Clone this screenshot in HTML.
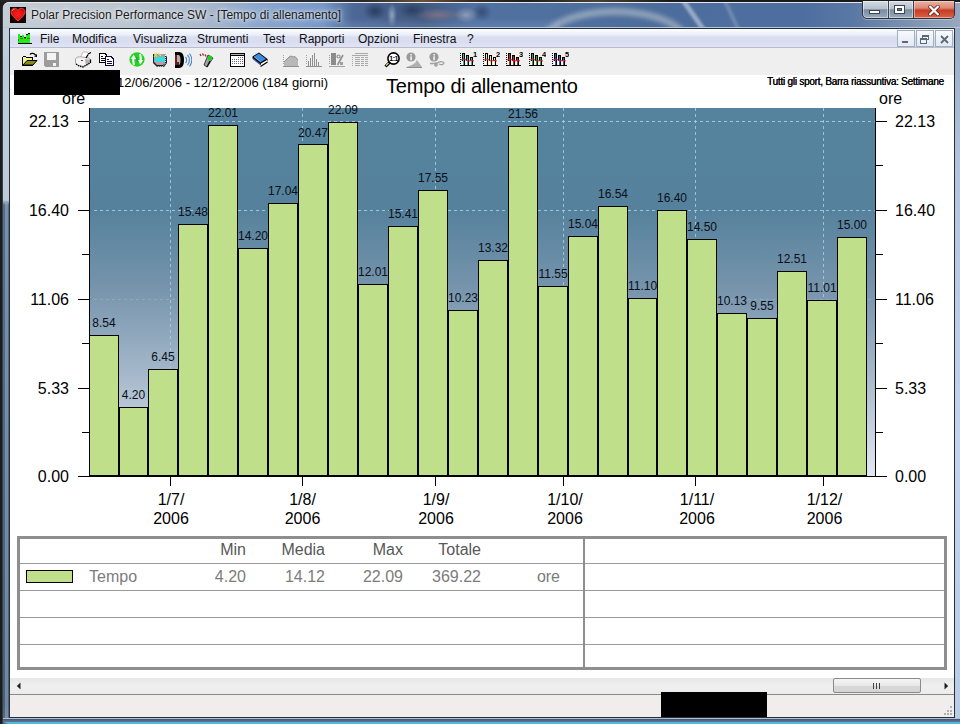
<!DOCTYPE html><html><head><meta charset="utf-8"><style>
*{margin:0;padding:0;box-sizing:border-box}
html,body{width:960px;height:724px;overflow:hidden;background:#1c1c1c;font-family:"Liberation Sans",sans-serif;}
.a{position:absolute}
.t{position:absolute;white-space:nowrap;line-height:1}
</style></head><body><div class="a" style="left:0;top:0;width:960px;height:2px;background:linear-gradient(90deg,#242424 0%,#2a2a2a 38%,#6a5238 44%,#3a2c22 49%,#1e1e1e 55%,#4a4030 62%,#1a1a1a 70%,#1a1a1a 100%)"></div>
<div class="a" style="left:2px;top:2px;width:958px;height:722px;border-radius:7px 0 0 0;background:linear-gradient(180deg,#b8c4d2 0px,#c4ced8 28px,#bccad8 60px,#bfcad8 198px,#566e88 203px,#4e6680 500px,#4a6078 700px,#5a7088 724px);border-left:1px solid #34404e"></div>
<div class="a" style="left:3px;top:2px;width:957px;height:26px;border-radius:6px 0 0 0;border-top:1px solid #e4eaf0;border-bottom:1px solid #b8c6d8;background:linear-gradient(90deg,#c3cbd3 0px,#bcc6d0 120px,#aab8cc 200px,#8aa6cc 260px,#7898c8 320px,#4d6896 350px,#40587e 420px,#5070a0 470px,#5070a0 540px,#4e6e9e 590px,#4c6c9c 650px,#4e6ea0 745px,#4e6ea0 800px,#5a78a4 850px,#7890b0 900px,#9aa8c0 960px)"></div>
<div class="a" style="left:3px;top:3px;width:957px;height:24px;overflow:hidden"><div class="a" style="left:337px;top:0;width:220px;height:24px;background:radial-gradient(ellipse 12px 9px at 35px 8px,rgba(30,45,80,.7),transparent),radial-gradient(ellipse 5px 12px at 52px 12px,rgba(175,190,210,.7),transparent),radial-gradient(ellipse 14px 8px at 72px 7px,rgba(30,45,80,.6),transparent),radial-gradient(ellipse 24px 7px at 98px 12px,rgba(160,125,135,.6),transparent),radial-gradient(ellipse 12px 8px at 126px 12px,rgba(185,185,195,.6),transparent),radial-gradient(ellipse 10px 9px at 142px 9px,rgba(35,50,85,.55),transparent),linear-gradient(180deg,transparent 15px,rgba(120,150,200,.3) 22px)"></div><div class="a" style="left:537px;top:5px;width:150px;height:70px;border-radius:50%;border:7px solid rgba(215,222,215,.5);filter:blur(2.5px)"></div><div class="a" style="left:688px;top:-2px;width:6px;height:30px;background:rgba(200,212,225,.6);transform:skewX(35deg);filter:blur(1.5px)"></div><div class="a" style="left:727px;top:-2px;width:4px;height:30px;background:rgba(180,195,215,.35);transform:skewX(25deg);filter:blur(1.5px)"></div></div>
<div class="a" style="left:5px;top:203px;width:3px;height:515px;background:rgba(190,210,230,.35)"></div>
<div class="a" style="left:955px;top:28px;width:5px;height:696px;background:linear-gradient(180deg,#98acc4 0%,#b4c4dc 20%,#c4d4ec 60%,#b8cce4 100%)"></div>
<div class="a" style="left:3px;top:718px;width:957px;height:6px;border-radius:0 0 0 6px;background:linear-gradient(180deg,#b8c0d0 0px,#b8c0d0 1px,#3e5470 1px,#5a7490 3.5px,#58b4d6 4.5px,#50c0e2 6px)"></div>
<div class="a" style="left:10px;top:7px;width:16px;height:16px;background:#140404"></div>
<svg class="a" style="left:10px;top:7px" width="16" height="16" viewBox="0 0 16 16"><defs><radialGradient id="hg" cx="0.5" cy="0.5" r="0.6"><stop offset="0" stop-color="#ff2020"/><stop offset="0.7" stop-color="#e01010"/><stop offset="1" stop-color="#a00808"/></radialGradient></defs><path d="M8 14 C5 11.2 1 8.2 1 4.9 C1 2.5 2.8 1.3 4.6 1.3 C6.2 1.3 7.4 2.3 8 3.3 C8.6 2.3 9.8 1.3 11.4 1.3 C13.2 1.3 15 2.5 15 4.9 C15 8.2 11 11.2 8 14Z" fill="url(#hg)" stroke="#e05050" stroke-width="0.9"/><path d="M2.2 4 C2.5 2.8 3.5 2.3 4.5 2.4" stroke="#ffa0a0" stroke-width="0.9" fill="none"/></svg>
<div class="t" style="left:31px;top:9px;font-size:12px;color:#1a1a1a;text-shadow:0 0 6px rgba(255,255,255,.9),0 0 3px rgba(255,255,255,.8)">Polar Precision Performance SW - [Tempo di allenamento]</div>
<div class="a" style="left:862px;top:1px;width:93px;height:18px;border:1px solid #2a3240;border-top:none;border-radius:0 0 5px 5px;overflow:hidden;background:#3a4250;box-shadow:0 1px 0 rgba(255,255,255,.35)"><div class="a" style="left:0;top:0;width:25px;height:17px;background:linear-gradient(180deg,#d4dce4 0%,#b4c0cc 45%,#7a8ca0 52%,#9aaabc 100%);box-shadow:inset 0 0 0 1px rgba(255,255,255,.45);border-radius:0 0 0 4px"></div><div class="a" style="left:26px;top:0;width:24px;height:17px;background:linear-gradient(180deg,#d4dce4 0%,#b4c0cc 45%,#7a8ca0 52%,#9aaabc 100%);box-shadow:inset 0 0 0 1px rgba(255,255,255,.45)"></div><div class="a" style="left:51px;top:0;width:42px;height:17px;background:linear-gradient(180deg,#eab4a4 0%,#dc8a78 40%,#c83c24 55%,#d86448 100%);box-shadow:inset 0 0 0 1px rgba(255,230,220,.5);border-radius:0 0 4px 0"></div></div>
<div class="a" style="left:869px;top:10px;width:11px;height:4px;background:#fff;border:1px solid #3a4656"></div>
<div class="a" style="left:894px;top:5px;width:11px;height:9px;border:1px solid #3a4656;background:#fff"><div class="a" style="left:2px;top:2px;width:5px;height:3px;background:#6a7888;border:1px solid #3a4656"></div></div>
<svg class="a" style="left:928px;top:5px" width="12" height="11" viewBox="0 0 12 11"><path d="M2.2 1.8 L9.8 9.2 M9.8 1.8 L2.2 9.2" stroke="#4a1008" stroke-width="3.8" stroke-linecap="square" opacity=".8"/><path d="M2.2 1.8 L9.8 9.2 M9.8 1.8 L2.2 9.2" stroke="#fff" stroke-width="2.3" stroke-linecap="square"/></svg>
<div class="a" style="left:9px;top:28px;width:946px;height:690px;border:1px solid #20303c;background:#fff"></div>
<div class="a" style="left:10px;top:29px;width:944px;height:19px;background:linear-gradient(180deg,#ffffff 0px,#f2f5fc 3px,#eaeefa 6px,#dadef0 8px,#d9ddf0 13px,#e2e4f6 18px);border-bottom:1px solid #b8bccc"></div>
<svg class="a" style="left:18px;top:32px" width="14" height="13" viewBox="0 0 14 13" shape-rendering="crispEdges"><path d="M0 2 H2 V4 H4 V3 H6 V5 H8 V2 H10 V1 H12 V11 H0Z" fill="#18f018"/><g fill="#000"><rect x="2" y="4" width="2" height="1"/><rect x="6" y="5" width="2" height="1"/><rect x="8" y="2" width="2" height="1"/><rect x="10" y="1" width="2" height="1"/><rect x="0" y="11" width="14" height="1.4"/></g><g fill="#707010"><rect x="0" y="7" width="1" height="2"/><rect x="2" y="6" width="3" height="1"/><rect x="6" y="6" width="2" height="1"/><rect x="9" y="6" width="3" height="1"/></g></svg>
<div class="t" style="left:40px;top:33px;font-size:12px;color:#101010">File</div>
<div class="t" style="left:72px;top:33px;font-size:12px;color:#101010">Modifica</div>
<div class="t" style="left:133px;top:33px;font-size:12px;color:#101010">Visualizza</div>
<div class="t" style="left:197px;top:33px;font-size:12px;color:#101010">Strumenti</div>
<div class="t" style="left:263px;top:33px;font-size:12px;color:#101010">Test</div>
<div class="t" style="left:299px;top:33px;font-size:12px;color:#101010">Rapporti</div>
<div class="t" style="left:358px;top:33px;font-size:12px;color:#101010">Opzioni</div>
<div class="t" style="left:413px;top:33px;font-size:12px;color:#101010">Finestra</div>
<div class="t" style="left:467px;top:33px;font-size:12px;color:#101010">?</div>
<div class="a" style="left:897px;top:30px;width:18px;height:17px;border:1px solid #a0aebe;background:linear-gradient(180deg,#f8fafd,#e2e9f4)"></div>
<div class="a" style="left:916px;top:30px;width:18px;height:17px;border:1px solid #a0aebe;background:linear-gradient(180deg,#f8fafd,#e2e9f4)"></div>
<div class="a" style="left:935px;top:30px;width:18px;height:17px;border:1px solid #a0aebe;background:linear-gradient(180deg,#f8fafd,#e2e9f4)"></div>
<div class="a" style="left:902px;top:41px;width:6px;height:2px;background:#5a6878"></div>
<div class="a" style="left:922px;top:35px;width:7px;height:5px;border:1px solid #5a6878;border-top-width:2px"></div><div class="a" style="left:920px;top:38px;width:7px;height:6px;border:1px solid #5a6878;border-top-width:2px;background:#eef2f8"></div>
<svg class="a" style="left:940px;top:35px" width="9" height="9" viewBox="0 0 9 9"><path d="M1 1 L8 8 M8 1 L1 8" stroke="#5a6878" stroke-width="1.8"/></svg>
<div class="a" style="left:10px;top:48px;width:944px;height:27px;background:#efefef"></div>
<svg class="a" style="left:21px;top:51px" width="17" height="16" viewBox="0 0 17 16" shape-rendering="crispEdges"><path d="M2 6 H12 V10 H2Z" fill="#f2f290"/><path d="M2 7 V14 L5 9.5 Z" fill="#f2f290"/><rect x="2" y="5" width="3" height="1" fill="#000"/><rect x="5" y="6" width="7" height="1" fill="#000"/><rect x="1" y="6" width="1" height="9" fill="#000"/><rect x="1" y="14" width="11" height="1" fill="#000"/><rect x="11" y="6" width="1" height="3" fill="#000"/><path d="M2 14 L6 9.5 H16 L12 14 Z" fill="#8a8a1a" stroke="#000" stroke-width="1" shape-rendering="geometricPrecision"/><path d="M9 3.5 C10 2 13 2 14.5 4" stroke="#000" stroke-width="1.3" fill="none" shape-rendering="geometricPrecision"/><path d="M13 5.5 L16 3 L16 6 Z" fill="#000" shape-rendering="geometricPrecision"/></svg>
<svg class="a" style="left:44px;top:52px" width="15" height="15" viewBox="0 0 15 15" shape-rendering="crispEdges"><rect x="0" y="0" width="15" height="15" fill="#9c9c9c"/><rect x="3" y="1" width="9" height="7" fill="#f4f4f4"/><rect x="9" y="11" width="3" height="3" fill="#f4f4f4"/><rect x="0" y="14" width="1" height="1" fill="#efefef"/></svg>
<svg class="a" style="left:74px;top:51px" width="18" height="17" viewBox="0 0 18 17" shape-rendering="geometricPrecision"><path d="M9 1 L13 1 L15 3 L12 7 L6 7 Z" fill="#fff" stroke="#b0b0b0" stroke-width="0.8"/><path d="M1.5 8 C2 6 5 5.5 8 6 L15 7 L16.5 9 L16.5 12 L9 15.5 L3 14 L1.5 12 Z" fill="#f4f2f2" stroke="#a8a8a8" stroke-width="1"/><path d="M11 8 L16.5 9 L16.5 12 L12 14 Z" fill="#b0b0b0"/><path d="M14 3 L17 1.5" stroke="#000" stroke-width="1.2"/><path d="M12 7 L14 3.5" stroke="#000" stroke-width="1.2"/><path d="M16.5 8.5 V12" stroke="#000" stroke-width="1.2"/><path d="M2 13 L5 15 L9 16 L16 12" stroke="#000" stroke-width="1.3" stroke-dasharray="1.5 .8" fill="none"/><rect x="7" y="9" width="2" height="1" fill="#604040"/></svg>
<svg class="a" style="left:99px;top:53px" width="16" height="14" viewBox="0 0 16 14" shape-rendering="crispEdges"><path d="M0 0 H6 L8 2 V10 H0Z" fill="#000"/><path d="M1 1 H5.5 L7 2.5 V9 H1Z" fill="#fff"/><rect x="2" y="3" width="2" height="1" fill="#000"/><rect x="2" y="5" width="4" height="1" fill="#000"/><rect x="2" y="7" width="4" height="1" fill="#000"/><path d="M6 3 H12 L15 6 V13 H6Z" fill="#0c0c40"/><path d="M7 4 H11.5 L14 6.5 V12 H7Z" fill="#fff"/><rect x="8" y="6" width="2" height="1" fill="#0c0c40"/><rect x="8" y="8" width="5" height="1" fill="#0c0c40"/><rect x="8" y="10" width="5" height="1" fill="#0c0c40"/></svg>
<svg class="a" style="left:129px;top:52px" width="16" height="15" viewBox="0 0 16 15" shape-rendering="geometricPrecision"><ellipse cx="8" cy="7.5" rx="7.6" ry="7.2" fill="#22d422"/><path d="M5 13 C4 10 4 8 4.5 6" stroke="#f6fff0" stroke-width="2.2" fill="none"/><path d="M1.8 7 L4.6 2.6 L7.4 7 Z" fill="#f6fff0"/><path d="M11 2 C12 5 12 7 11.5 9" stroke="#f6fff0" stroke-width="2.2" fill="none"/><path d="M8.6 8 L11.4 12.4 L14.2 8 Z" fill="#f6fff0"/><path d="M7 5 L9 10" stroke="#2a9a5a" stroke-width="1.5"/></svg>
<svg class="a" style="left:152px;top:52px" width="16" height="16" viewBox="0 0 16 16" shape-rendering="geometricPrecision"><path d="M1 2 H13 L15 5 V11 L12 15 H5 L1 11Z" fill="#202020"/><path d="M2 2 H13 V11 L11 13 H5 L2 10Z" fill="#a8a0a8"/><path d="M3 5 H13 V10 H3Z" fill="#30e0e8"/><path d="M3 10 H12 L10 12 H5Z" fill="#d890a0"/><path d="M2 1 L5 5 M5 1 L2 5 M6 1 L9 4" stroke="#e8e040" stroke-width="1.2"/><path d="M13.5 3 V11 L11 14.5 H5" stroke="#fff" stroke-width="1" stroke-dasharray="1 1" fill="none"/></svg>
<svg class="a" style="left:175px;top:52px" width="17" height="16" viewBox="0 0 17 16" shape-rendering="geometricPrecision"><path d="M0 0 H4 C8 0 9 4 9 8 C9 12 8 16 4 16 H0Z" fill="#000"/><path d="M0 3 H4 C6 4 6 12 4 13 H0Z" fill="#b0b0b0"/><path d="M0 3 H2 V13 H0Z" fill="#801818"/><path d="M1 10 H4 V13 H1Z" fill="#602020"/><path d="M10.5 5 C12 6.5 12 9.5 10.5 11 M12.5 3 C15 5.5 15 10.5 12.5 13 M14.5 1.5 C17.5 5 17.5 11 14.5 14.5" stroke="#4a88d0" stroke-width="1.1" fill="none"/></svg>
<svg class="a" style="left:199px;top:52px" width="15" height="16" viewBox="0 0 15 16" shape-rendering="geometricPrecision"><path d="M1 2 L2 4 M3.5 1.5 L4.5 3.5 M6 2.5 L7 4.5" stroke="#a02020" stroke-width="1.3"/><path d="M9 3 L14 6 L8 15 L5 13 Z" fill="#a0a0a0" stroke="#303030" stroke-width="0.9"/><path d="M11 9 L8 15" stroke="#101010" stroke-width="1.4"/><circle cx="11" cy="6" r="2.4" fill="#20d020"/></svg>
<svg class="a" style="left:230px;top:53px" width="15" height="14" viewBox="0 0 15 14" shape-rendering="crispEdges"><rect x="0" y="0" width="15" height="14" fill="#000"/><rect x="1" y="3" width="13" height="10" fill="#fff"/><rect x="1" y="1" width="13" height="1" fill="#b0b0b8"/><g fill="#607080"><rect x="2" y="6" width="1" height="1"/><rect x="4" y="6" width="1" height="1"/><rect x="6" y="6" width="1" height="1"/><rect x="8" y="6" width="1" height="1"/><rect x="10" y="6" width="1" height="1"/><rect x="2" y="8" width="1" height="1"/><rect x="4" y="8" width="1" height="1"/><rect x="6" y="8" width="1" height="1"/><rect x="8" y="8" width="1" height="1"/><rect x="10" y="8" width="1" height="1"/><rect x="2" y="10" width="1" height="1"/><rect x="4" y="10" width="1" height="1"/><rect x="6" y="10" width="1" height="1"/><rect x="8" y="10" width="1" height="1"/><rect x="10" y="10" width="1" height="1"/><rect x="8" y="4" width="1" height="1"/><rect x="10" y="4" width="1" height="1"/></g><g fill="#a03050"><rect x="12" y="4" width="1" height="1"/><rect x="12" y="6" width="1" height="1"/><rect x="12" y="8" width="1" height="1"/><rect x="12" y="10" width="1" height="1"/></g></svg>
<svg class="a" style="left:252px;top:52px" width="16" height="15" viewBox="0 0 16 15" shape-rendering="geometricPrecision"><path d="M0.5 4.5 L7 0.5 L15.5 7 L15.5 9 L9 13 L0.5 6.5 Z" fill="#000"/><path d="M2 4.5 L7 1.5 L14 7 L9 10 Z" fill="#3a8ae0"/><path d="M1 6 L8 11.5 L8 13 L1 7.5Z" fill="#2a6ac0"/><path d="M2 4.7 L9 10.2" stroke="#b0e0ff" stroke-width="0.8"/><path d="M9 11.5 L15 8 L15 10 L9 13.5Z" fill="#fff"/><path d="M8.5 14.5 L15.5 10" stroke="#000" stroke-width="1.2"/></svg>
<svg class="a" style="left:283px;top:53px" width="17" height="14" viewBox="0 0 17 14" shape-rendering="geometricPrecision"><g fill="#a0a0a0"><rect x="0" y="2" width="1" height="1"/><rect x="0" y="4" width="1" height="1"/><rect x="0" y="6" width="1" height="1"/><rect x="0" y="8" width="1" height="1"/><rect x="0" y="10" width="1" height="1"/></g><path d="M1 13 V9 L4 6 L6 4 L8 3 L10 4 L12 3.5 L15 7 V13Z" fill="#b8b8b8"/><path d="M1 9 L4 6 L6 4 L8 3 L10 4 L12 3.5 L15 7" stroke="#909090" stroke-width="1" fill="none"/><rect x="0" y="13" width="16" height="1" fill="#909090"/></svg>
<svg class="a" style="left:306px;top:53px" width="16" height="14" viewBox="0 0 16 14" shape-rendering="crispEdges"><g fill="#a0a0a0"><rect x="0" y="2" width="1" height="1"/><rect x="0" y="4" width="1" height="1"/><rect x="0" y="6" width="1" height="1"/><rect x="0" y="8" width="1" height="1"/><rect x="0" y="10" width="1" height="1"/></g><g fill="#909090"><rect x="2" y="8" width="1" height="5"/><rect x="4" y="5" width="1" height="8"/><rect x="6" y="2" width="1" height="11"/><rect x="8" y="0" width="1" height="13"/><rect x="10" y="6" width="1" height="7"/><rect x="12" y="9" width="1" height="4"/><rect x="0" y="13" width="16" height="1"/></g></svg>
<svg class="a" style="left:329px;top:53px" width="16" height="14" viewBox="0 0 16 14" shape-rendering="crispEdges"><g fill="#a0a0a0"><rect x="0" y="2" width="1" height="1"/><rect x="0" y="4" width="1" height="1"/><rect x="0" y="6" width="1" height="1"/><rect x="0" y="8" width="1" height="1"/><rect x="0" y="10" width="1" height="1"/></g><rect x="2" y="0" width="5" height="12" fill="#8c8c8c"/><path d="M8.5 12 L14 2" stroke="#909090" stroke-width="1.6" shape-rendering="geometricPrecision"/><circle cx="9.5" cy="3.5" r="1.5" fill="none" stroke="#909090" stroke-width="1.2" shape-rendering="geometricPrecision"/><rect x="11" y="9" width="3" height="3" fill="#a0a0a0"/><rect x="0" y="13" width="16" height="1" fill="#a0a0a0"/></svg>
<svg class="a" style="left:352px;top:53px" width="16" height="14" viewBox="0 0 16 14" shape-rendering="crispEdges"><g fill="#a8a8a8"><rect x="3" y="0" width="13" height="1"/><rect x="0" y="2" width="16" height="1"/><rect x="0" y="4" width="1" height="1"/><rect x="3" y="4" width="5" height="1"/><rect x="9" y="4" width="3" height="1"/><rect x="13" y="4" width="3" height="1"/><rect x="0" y="6" width="1" height="1"/><rect x="3" y="6" width="5" height="1"/><rect x="9" y="6" width="3" height="1"/><rect x="13" y="6" width="3" height="1"/><rect x="0" y="8" width="1" height="1"/><rect x="3" y="8" width="5" height="1"/><rect x="9" y="8" width="3" height="1"/><rect x="13" y="8" width="3" height="1"/><rect x="0" y="10" width="1" height="1"/><rect x="3" y="10" width="5" height="1"/><rect x="9" y="10" width="3" height="1"/><rect x="13" y="10" width="3" height="1"/><rect x="0" y="12" width="1" height="1"/><rect x="3" y="12" width="5" height="1"/><rect x="9" y="12" width="3" height="1"/><rect x="13" y="12" width="3" height="1"/></g></svg>
<svg class="a" style="left:384px;top:52px" width="16" height="16" viewBox="0 0 16 16" shape-rendering="geometricPrecision"><path d="M5.5 10.5 L1.5 14.5" stroke="#000" stroke-width="3"/><path d="M4.5 11 L2 13.5" stroke="#d8e060" stroke-width="1.2"/><circle cx="9.5" cy="6.5" r="5.6" fill="#fff" stroke="#000" stroke-width="1.6"/><text x="9.6" y="9" font-size="7" font-family="Liberation Sans" font-weight="bold" text-anchor="middle" fill="#000" letter-spacing="-0.5">1:1</text></svg>
<svg class="a" style="left:406px;top:52px" width="17" height="16" viewBox="0 0 17 16" shape-rendering="geometricPrecision"><circle cx="5" cy="5" r="4.6" fill="#9a9a9a"/><rect x="4.2" y="2" width="1.8" height="1.5" fill="#e8e8e8"/><rect x="4.2" y="4.3" width="1.8" height="4" fill="#e8e8e8"/><path d="M0.5 15 L6 13 L9 11 L11 8 L16 15Z" fill="#b0b0b0"/><path d="M0.5 15.5 H16" stroke="#909090"/></svg>
<svg class="a" style="left:429px;top:52px" width="16" height="16" viewBox="0 0 16 16" shape-rendering="geometricPrecision"><circle cx="5" cy="5" r="4.6" fill="#9a9a9a"/><rect x="4.2" y="2" width="1.8" height="1.5" fill="#e8e8e8"/><rect x="4.2" y="4.3" width="1.8" height="4" fill="#e8e8e8"/><path d="M1 11.5 H8 M8 11.5 C10 9 14 9 15 11 C14 13 12 13 10 12" stroke="#a0a0a0" stroke-width="1.3" fill="none"/><path d="M7 10 V15 M5 13 H9" stroke="#a0a0a0" stroke-width="1.3"/></svg>
<svg class="a" style="left:460px;top:51px" width="17" height="16" viewBox="0 0 17 16" shape-rendering="crispEdges"><g fill="#000"><rect x="0" y="2" width="1" height="1"/><rect x="0" y="4" width="1" height="1"/><rect x="0" y="6" width="1" height="1"/><rect x="0" y="8" width="1" height="1"/><rect x="0" y="10" width="1" height="1"/><rect x="0" y="12" width="1" height="1"/><rect x="0" y="14" width="15" height="1"/><rect x="2" y="2" width="3" height="12"/><rect x="6" y="4" width="3" height="10"/><rect x="10" y="6" width="3" height="8"/></g><g fill="#38b898"><rect x="3" y="3" width="1" height="11"/><rect x="7" y="5" width="1" height="9"/><rect x="11" y="7" width="1" height="7"/></g><g fill="#fff"><rect x="2" y="10" width="1" height="4"/><rect x="6" y="10" width="1" height="4"/><rect x="10" y="10" width="1" height="4"/></g><path d="M1 9 L4 8 L8 10 L12 9.5 L14 10" stroke="#d02040" stroke-width="1" fill="none" shape-rendering="geometricPrecision"/><text x="13" y="6" font-size="7.5" font-family="Liberation Sans" font-weight="bold" fill="#000">1</text></svg>
<svg class="a" style="left:483px;top:51px" width="17" height="16" viewBox="0 0 17 16" shape-rendering="crispEdges"><g fill="#000"><rect x="0" y="2" width="1" height="1"/><rect x="0" y="4" width="1" height="1"/><rect x="0" y="6" width="1" height="1"/><rect x="0" y="8" width="1" height="1"/><rect x="0" y="10" width="1" height="1"/><rect x="0" y="12" width="1" height="1"/><rect x="0" y="14" width="15" height="1"/><rect x="2" y="2" width="3" height="12"/><rect x="6" y="4" width="3" height="10"/><rect x="10" y="6" width="3" height="8"/></g><g fill="#f0f080"><rect x="3" y="3" width="1" height="11"/><rect x="7" y="5" width="1" height="9"/><rect x="11" y="7" width="1" height="7"/></g><g fill="#fff"><rect x="2" y="10" width="1" height="4"/><rect x="6" y="10" width="1" height="4"/><rect x="10" y="10" width="1" height="4"/></g><path d="M1 9 L4 8 L8 10 L12 9.5 L14 10" stroke="#d02040" stroke-width="1" fill="none" shape-rendering="geometricPrecision"/><text x="13" y="6" font-size="7.5" font-family="Liberation Sans" font-weight="bold" fill="#000">2</text></svg>
<svg class="a" style="left:506px;top:51px" width="17" height="16" viewBox="0 0 17 16" shape-rendering="crispEdges"><g fill="#000"><rect x="0" y="2" width="1" height="1"/><rect x="0" y="4" width="1" height="1"/><rect x="0" y="6" width="1" height="1"/><rect x="0" y="8" width="1" height="1"/><rect x="0" y="10" width="1" height="1"/><rect x="0" y="12" width="1" height="1"/><rect x="0" y="14" width="15" height="1"/><rect x="2" y="2" width="3" height="12"/><rect x="6" y="4" width="3" height="10"/><rect x="10" y="6" width="3" height="8"/></g><g fill="#c02818"><rect x="3" y="3" width="1" height="11"/><rect x="7" y="5" width="1" height="9"/><rect x="11" y="7" width="1" height="7"/></g><g fill="#fff"><rect x="2" y="10" width="1" height="4"/><rect x="6" y="10" width="1" height="4"/><rect x="10" y="10" width="1" height="4"/></g><path d="M1 9 L4 8 L8 10 L12 9.5 L14 10" stroke="#d02040" stroke-width="1" fill="none" shape-rendering="geometricPrecision"/><text x="13" y="6" font-size="7.5" font-family="Liberation Sans" font-weight="bold" fill="#000">3</text></svg>
<svg class="a" style="left:529px;top:51px" width="17" height="16" viewBox="0 0 17 16" shape-rendering="crispEdges"><g fill="#000"><rect x="0" y="2" width="1" height="1"/><rect x="0" y="4" width="1" height="1"/><rect x="0" y="6" width="1" height="1"/><rect x="0" y="8" width="1" height="1"/><rect x="0" y="10" width="1" height="1"/><rect x="0" y="12" width="1" height="1"/><rect x="0" y="14" width="15" height="1"/><rect x="2" y="2" width="3" height="12"/><rect x="6" y="4" width="3" height="10"/><rect x="10" y="6" width="3" height="8"/></g><g fill="#30b030"><rect x="3" y="3" width="1" height="11"/><rect x="7" y="5" width="1" height="9"/><rect x="11" y="7" width="1" height="7"/></g><g fill="#fff"><rect x="2" y="10" width="1" height="4"/><rect x="6" y="10" width="1" height="4"/><rect x="10" y="10" width="1" height="4"/></g><path d="M1 9 L4 8 L8 10 L12 9.5 L14 10" stroke="#d02040" stroke-width="1" fill="none" shape-rendering="geometricPrecision"/><text x="13" y="6" font-size="7.5" font-family="Liberation Sans" font-weight="bold" fill="#000">4</text></svg>
<svg class="a" style="left:552px;top:51px" width="17" height="16" viewBox="0 0 17 16" shape-rendering="crispEdges"><g fill="#000"><rect x="0" y="2" width="1" height="1"/><rect x="0" y="4" width="1" height="1"/><rect x="0" y="6" width="1" height="1"/><rect x="0" y="8" width="1" height="1"/><rect x="0" y="10" width="1" height="1"/><rect x="0" y="12" width="1" height="1"/><rect x="0" y="14" width="15" height="1"/><rect x="2" y="2" width="3" height="12"/><rect x="6" y="4" width="3" height="10"/><rect x="10" y="6" width="3" height="8"/></g><g fill="#3858b8"><rect x="3" y="3" width="1" height="11"/><rect x="7" y="5" width="1" height="9"/><rect x="11" y="7" width="1" height="7"/></g><g fill="#fff"><rect x="2" y="10" width="1" height="4"/><rect x="6" y="10" width="1" height="4"/><rect x="10" y="10" width="1" height="4"/></g><path d="M1 9 L4 8 L8 10 L12 9.5 L14 10" stroke="#d02040" stroke-width="1" fill="none" shape-rendering="geometricPrecision"/><text x="13" y="6" font-size="7.5" font-family="Liberation Sans" font-weight="bold" fill="#000">5</text></svg>
<div class="a" style="left:14px;top:70px;width:106px;height:25px;background:#000"></div>
<div class="t" style="left:117px;top:76px;font-size:13px;color:#000">12/06/2006 - 12/12/2006 (184 giorni)</div>
<div class="t" style="left:386px;top:76px;font-size:20px;color:#000;letter-spacing:-0.2px">Tempo di allenamento</div>
<div class="t" style="left:767px;top:77px;font-size:10px;letter-spacing:-0.25px;color:#000;text-shadow:0.3px 0 0 #000">Tutti gli sport, Barra riassuntiva: Settimane</div>
<div class="t" style="left:62px;top:91px;font-size:16px;color:#000">ore</div>
<div class="t" style="left:879px;top:91px;font-size:16px;color:#000">ore</div>
<div class="a" style="left:89px;top:108px;width:786px;height:368px;background:linear-gradient(180deg,#55839e 0px,#55819c 100px,#7694ac 180px,#adbecf 280px,#e2e8f1 368px)"></div>
<div class="a" style="left:170px;top:108px;width:1px;height:368px;background:repeating-linear-gradient(180deg,#a8d0ea 0px,#a8d0ea 3px,transparent 3px,transparent 6px);opacity:.8"></div>
<div class="a" style="left:302px;top:108px;width:1px;height:368px;background:repeating-linear-gradient(180deg,#a8d0ea 0px,#a8d0ea 3px,transparent 3px,transparent 6px);opacity:.8"></div>
<div class="a" style="left:435px;top:108px;width:1px;height:368px;background:repeating-linear-gradient(180deg,#a8d0ea 0px,#a8d0ea 3px,transparent 3px,transparent 6px);opacity:.8"></div>
<div class="a" style="left:563px;top:108px;width:1px;height:368px;background:repeating-linear-gradient(180deg,#a8d0ea 0px,#a8d0ea 3px,transparent 3px,transparent 6px);opacity:.8"></div>
<div class="a" style="left:695px;top:108px;width:1px;height:368px;background:repeating-linear-gradient(180deg,#a8d0ea 0px,#a8d0ea 3px,transparent 3px,transparent 6px);opacity:.8"></div>
<div class="a" style="left:823px;top:108px;width:1px;height:368px;background:repeating-linear-gradient(180deg,#a8d0ea 0px,#a8d0ea 3px,transparent 3px,transparent 6px);opacity:.8"></div>
<div class="a" style="left:94px;top:388px;width:781px;height:1px;background:repeating-linear-gradient(90deg,#a8d0ea 0px,#a8d0ea 3px,transparent 3px,transparent 6px);opacity:0.2"></div>
<div class="a" style="left:94px;top:299px;width:781px;height:1px;background:repeating-linear-gradient(90deg,#a8d0ea 0px,#a8d0ea 3px,transparent 3px,transparent 6px);opacity:0.3"></div>
<div class="a" style="left:94px;top:210px;width:781px;height:1px;background:repeating-linear-gradient(90deg,#a8d0ea 0px,#a8d0ea 3px,transparent 3px,transparent 6px);opacity:0.85"></div>
<div class="a" style="left:94px;top:121px;width:781px;height:1px;background:repeating-linear-gradient(90deg,#a8d0ea 0px,#a8d0ea 3px,transparent 3px,transparent 6px);opacity:0.9"></div>
<div class="a" style="left:89px;top:335px;width:30px;height:141px;background:#c0df8a;border:1px solid #000"></div>
<div class="t" style="left:79px;width:50px;text-align:center;top:317px;font-size:12px;color:#0a0f18">8.54</div>
<div class="a" style="left:119px;top:407px;width:29px;height:69px;background:#c0df8a;border:1px solid #000"></div>
<div class="t" style="left:109px;width:49px;text-align:center;top:389px;font-size:12px;color:#0a0f18">4.20</div>
<div class="a" style="left:148px;top:369px;width:30px;height:107px;background:#c0df8a;border:1px solid #000"></div>
<div class="t" style="left:138px;width:50px;text-align:center;top:351px;font-size:12px;color:#0a0f18">6.45</div>
<div class="a" style="left:178px;top:224px;width:30px;height:252px;background:#c0df8a;border:1px solid #000"></div>
<div class="t" style="left:168px;width:50px;text-align:center;top:206px;font-size:12px;color:#0a0f18">15.48</div>
<div class="a" style="left:208px;top:125px;width:30px;height:351px;background:#c0df8a;border:1px solid #000"></div>
<div class="t" style="left:198px;width:50px;text-align:center;top:107px;font-size:12px;color:#0a0f18">22.01</div>
<div class="a" style="left:238px;top:248px;width:30px;height:228px;background:#c0df8a;border:1px solid #000"></div>
<div class="t" style="left:228px;width:50px;text-align:center;top:230px;font-size:12px;color:#0a0f18">14.20</div>
<div class="a" style="left:268px;top:203px;width:30px;height:273px;background:#c0df8a;border:1px solid #000"></div>
<div class="t" style="left:258px;width:50px;text-align:center;top:185px;font-size:12px;color:#0a0f18">17.04</div>
<div class="a" style="left:298px;top:144px;width:30px;height:332px;background:#c0df8a;border:1px solid #000"></div>
<div class="t" style="left:288px;width:50px;text-align:center;top:127px;font-size:12px;color:#0a0f18">20.47</div>
<div class="a" style="left:328px;top:122px;width:30px;height:354px;background:#c0df8a;border:1px solid #000"></div>
<div class="t" style="left:318px;width:50px;text-align:center;top:104px;font-size:12px;color:#0a0f18">22.09</div>
<div class="a" style="left:358px;top:284px;width:30px;height:192px;background:#c0df8a;border:1px solid #000"></div>
<div class="t" style="left:348px;width:50px;text-align:center;top:266px;font-size:12px;color:#0a0f18">12.01</div>
<div class="a" style="left:388px;top:226px;width:30px;height:250px;background:#c0df8a;border:1px solid #000"></div>
<div class="t" style="left:378px;width:50px;text-align:center;top:208px;font-size:12px;color:#0a0f18">15.41</div>
<div class="a" style="left:418px;top:190px;width:30px;height:286px;background:#c0df8a;border:1px solid #000"></div>
<div class="t" style="left:408px;width:50px;text-align:center;top:172px;font-size:12px;color:#0a0f18">17.55</div>
<div class="a" style="left:448px;top:310px;width:30px;height:166px;background:#c0df8a;border:1px solid #000"></div>
<div class="t" style="left:438px;width:50px;text-align:center;top:292px;font-size:12px;color:#0a0f18">10.23</div>
<div class="a" style="left:478px;top:260px;width:30px;height:216px;background:#c0df8a;border:1px solid #000"></div>
<div class="t" style="left:468px;width:50px;text-align:center;top:242px;font-size:12px;color:#0a0f18">13.32</div>
<div class="a" style="left:508px;top:126px;width:30px;height:350px;background:#c0df8a;border:1px solid #000"></div>
<div class="t" style="left:498px;width:50px;text-align:center;top:108px;font-size:12px;color:#0a0f18">21.56</div>
<div class="a" style="left:538px;top:286px;width:30px;height:190px;background:#c0df8a;border:1px solid #000"></div>
<div class="t" style="left:528px;width:50px;text-align:center;top:268px;font-size:12px;color:#0a0f18">11.55</div>
<div class="a" style="left:568px;top:236px;width:30px;height:240px;background:#c0df8a;border:1px solid #000"></div>
<div class="t" style="left:558px;width:50px;text-align:center;top:218px;font-size:12px;color:#0a0f18">15.04</div>
<div class="a" style="left:598px;top:206px;width:30px;height:270px;background:#c0df8a;border:1px solid #000"></div>
<div class="t" style="left:588px;width:50px;text-align:center;top:188px;font-size:12px;color:#0a0f18">16.54</div>
<div class="a" style="left:628px;top:298px;width:29px;height:178px;background:#c0df8a;border:1px solid #000"></div>
<div class="t" style="left:618px;width:49px;text-align:center;top:280px;font-size:12px;color:#0a0f18">11.10</div>
<div class="a" style="left:657px;top:210px;width:30px;height:266px;background:#c0df8a;border:1px solid #000"></div>
<div class="t" style="left:647px;width:50px;text-align:center;top:192px;font-size:12px;color:#0a0f18">16.40</div>
<div class="a" style="left:687px;top:239px;width:30px;height:237px;background:#c0df8a;border:1px solid #000"></div>
<div class="t" style="left:677px;width:50px;text-align:center;top:221px;font-size:12px;color:#0a0f18">14.50</div>
<div class="a" style="left:717px;top:313px;width:30px;height:163px;background:#c0df8a;border:1px solid #000"></div>
<div class="t" style="left:707px;width:50px;text-align:center;top:295px;font-size:12px;color:#0a0f18">10.13</div>
<div class="a" style="left:747px;top:318px;width:30px;height:158px;background:#c0df8a;border:1px solid #000"></div>
<div class="t" style="left:737px;width:50px;text-align:center;top:300px;font-size:12px;color:#0a0f18">9.55</div>
<div class="a" style="left:777px;top:271px;width:30px;height:205px;background:#c0df8a;border:1px solid #000"></div>
<div class="t" style="left:767px;width:50px;text-align:center;top:253px;font-size:12px;color:#0a0f18">12.51</div>
<div class="a" style="left:807px;top:300px;width:30px;height:176px;background:#c0df8a;border:1px solid #000"></div>
<div class="t" style="left:797px;width:50px;text-align:center;top:282px;font-size:12px;color:#0a0f18">11.01</div>
<div class="a" style="left:837px;top:237px;width:30px;height:239px;background:#c0df8a;border:1px solid #000"></div>
<div class="t" style="left:827px;width:50px;text-align:center;top:219px;font-size:12px;color:#0a0f18">15.00</div>
<div class="a" style="left:89px;top:108px;width:1px;height:369px;background:#000"></div>
<div class="a" style="left:875px;top:108px;width:1px;height:369px;background:#000"></div>
<div class="a" style="left:78px;top:476px;width:809px;height:1px;background:#000"></div>
<div class="a" style="left:78px;top:476px;width:11px;height:1px;background:#000"></div>
<div class="a" style="left:876px;top:476px;width:11px;height:1px;background:#000"></div>
<div class="t" style="left:0px;width:69px;text-align:right;top:469px;font-size:16px;color:#000">0.00</div>
<div class="t" style="left:895px;top:469px;font-size:16px;color:#000">0.00</div>
<div class="a" style="left:78px;top:388px;width:11px;height:1px;background:#000"></div>
<div class="a" style="left:876px;top:388px;width:11px;height:1px;background:#000"></div>
<div class="t" style="left:0px;width:69px;text-align:right;top:381px;font-size:16px;color:#000">5.33</div>
<div class="t" style="left:895px;top:381px;font-size:16px;color:#000">5.33</div>
<div class="a" style="left:78px;top:299px;width:11px;height:1px;background:#000"></div>
<div class="a" style="left:876px;top:299px;width:11px;height:1px;background:#000"></div>
<div class="t" style="left:0px;width:69px;text-align:right;top:292px;font-size:16px;color:#000">11.06</div>
<div class="t" style="left:895px;top:292px;font-size:16px;color:#000">11.06</div>
<div class="a" style="left:78px;top:210px;width:11px;height:1px;background:#000"></div>
<div class="a" style="left:876px;top:210px;width:11px;height:1px;background:#000"></div>
<div class="t" style="left:0px;width:69px;text-align:right;top:203px;font-size:16px;color:#000">16.40</div>
<div class="t" style="left:895px;top:203px;font-size:16px;color:#000">16.40</div>
<div class="a" style="left:78px;top:121px;width:11px;height:1px;background:#000"></div>
<div class="a" style="left:876px;top:121px;width:11px;height:1px;background:#000"></div>
<div class="t" style="left:0px;width:69px;text-align:right;top:114px;font-size:16px;color:#000">22.13</div>
<div class="t" style="left:895px;top:114px;font-size:16px;color:#000">22.13</div>
<div class="a" style="left:82px;top:432px;width:7px;height:1px;background:#000"></div>
<div class="a" style="left:876px;top:432px;width:7px;height:1px;background:#000"></div>
<div class="a" style="left:82px;top:343px;width:7px;height:1px;background:#000"></div>
<div class="a" style="left:876px;top:343px;width:7px;height:1px;background:#000"></div>
<div class="a" style="left:82px;top:254px;width:7px;height:1px;background:#000"></div>
<div class="a" style="left:876px;top:254px;width:7px;height:1px;background:#000"></div>
<div class="a" style="left:82px;top:165px;width:7px;height:1px;background:#000"></div>
<div class="a" style="left:876px;top:165px;width:7px;height:1px;background:#000"></div>
<div class="a" style="left:170px;top:477px;width:1px;height:9px;background:#000"></div>
<div class="t" style="left:131px;width:80px;text-align:center;top:492px;font-size:16px;color:#000">1/7/</div>
<div class="t" style="left:131px;width:80px;text-align:center;top:511px;font-size:16px;color:#000">2006</div>
<div class="a" style="left:302px;top:477px;width:1px;height:9px;background:#000"></div>
<div class="t" style="left:262.5px;width:80px;text-align:center;top:492px;font-size:16px;color:#000">1/8/</div>
<div class="t" style="left:262.5px;width:80px;text-align:center;top:511px;font-size:16px;color:#000">2006</div>
<div class="a" style="left:435px;top:477px;width:1px;height:9px;background:#000"></div>
<div class="t" style="left:396px;width:80px;text-align:center;top:492px;font-size:16px;color:#000">1/9/</div>
<div class="t" style="left:396px;width:80px;text-align:center;top:511px;font-size:16px;color:#000">2006</div>
<div class="a" style="left:563px;top:477px;width:1px;height:9px;background:#000"></div>
<div class="t" style="left:525px;width:80px;text-align:center;top:492px;font-size:16px;color:#000">1/10/</div>
<div class="t" style="left:525px;width:80px;text-align:center;top:511px;font-size:16px;color:#000">2006</div>
<div class="a" style="left:695px;top:477px;width:1px;height:9px;background:#000"></div>
<div class="t" style="left:657px;width:80px;text-align:center;top:492px;font-size:16px;color:#000">1/11/</div>
<div class="t" style="left:657px;width:80px;text-align:center;top:511px;font-size:16px;color:#000">2006</div>
<div class="a" style="left:823px;top:477px;width:1px;height:9px;background:#000"></div>
<div class="t" style="left:784.5px;width:80px;text-align:center;top:492px;font-size:16px;color:#000">1/12/</div>
<div class="t" style="left:784.5px;width:80px;text-align:center;top:511px;font-size:16px;color:#000">2006</div>
<div class="a" style="left:17px;top:536px;width:930px;height:134px;border:3px solid #8e8e8e;background:#fff"></div>
<div class="a" style="left:20px;top:563px;width:924px;height:1px;background:#9a9a9a"></div>
<div class="a" style="left:20px;top:590px;width:924px;height:1px;background:#9a9a9a"></div>
<div class="a" style="left:20px;top:617px;width:924px;height:1px;background:#9a9a9a"></div>
<div class="a" style="left:20px;top:644px;width:924px;height:1px;background:#9a9a9a"></div>
<div class="a" style="left:583px;top:539px;width:2px;height:128px;background:#8e8e8e"></div>
<div class="t" style="left:166px;width:80px;text-align:right;top:542px;font-size:16px;color:#585858">Min</div>
<div class="t" style="left:245px;width:80px;text-align:right;top:542px;font-size:16px;color:#585858">Media</div>
<div class="t" style="left:323px;width:80px;text-align:right;top:542px;font-size:16px;color:#585858">Max</div>
<div class="t" style="left:401px;width:80px;text-align:right;top:542px;font-size:16px;color:#585858">Totale</div>
<div class="t" style="left:166px;width:80px;text-align:right;top:569px;font-size:16px;color:#7c7c7c">4.20</div>
<div class="t" style="left:245px;width:80px;text-align:right;top:569px;font-size:16px;color:#7c7c7c">14.12</div>
<div class="t" style="left:323px;width:80px;text-align:right;top:569px;font-size:16px;color:#7c7c7c">22.09</div>
<div class="t" style="left:401px;width:80px;text-align:right;top:569px;font-size:16px;color:#7c7c7c">369.22</div>
<div class="t" style="left:480px;width:80px;text-align:right;top:569px;font-size:16px;color:#7c7c7c">ore</div>
<div class="a" style="left:26px;top:570px;width:47px;height:13px;background:#c0df8a;border:1px solid #000"></div>
<div class="t" style="left:89px;top:569px;font-size:16px;color:#7c7c7c">Tempo</div>
<div class="a" style="left:10px;top:678px;width:944px;height:16px;background:linear-gradient(180deg,#e6e6e6,#f0f0f0 50%,#ececec)"></div>
<div class="a" style="left:10px;top:694px;width:944px;height:1px;background:#8a8a8a"></div>
<svg class="a" style="left:16px;top:682px" width="5" height="8" viewBox="0 0 5 8"><path d="M4.5 0.5 L0.8 4 L4.5 7.5 Z" fill="#202020"/></svg>
<svg class="a" style="left:944px;top:682px" width="5" height="8" viewBox="0 0 5 8"><path d="M0.5 0.5 L4.2 4 L0.5 7.5 Z" fill="#202020"/></svg>
<div class="a" style="left:833px;top:678px;width:88px;height:15px;border:1px solid #8a8a8a;border-radius:2px;background:linear-gradient(180deg,#f6f6f6 0%,#e8e8e8 50%,#d8d8d8 51%,#d4d4d4 100%)"></div>
<div class="a" style="left:873px;top:683px;width:1px;height:6px;background:#404040"></div><div class="a" style="left:876px;top:683px;width:1px;height:6px;background:#404040"></div><div class="a" style="left:879px;top:683px;width:1px;height:6px;background:#404040"></div>
<div class="a" style="left:10px;top:695px;width:944px;height:22px;background:#f1eded"></div>
<div class="a" style="left:661px;top:692px;width:106px;height:25px;background:#000"></div>
<svg class="a" style="left:943px;top:704px" width="10" height="12" viewBox="0 0 10 12"><g fill="#b0b0b0"><rect x="7" y="2" width="2" height="2"/><rect x="4" y="6" width="2" height="2"/><rect x="7" y="6" width="2" height="2"/><rect x="1" y="9" width="2" height="2"/><rect x="4" y="9" width="2" height="2"/><rect x="7" y="9" width="2" height="2"/></g></svg></body></html>
